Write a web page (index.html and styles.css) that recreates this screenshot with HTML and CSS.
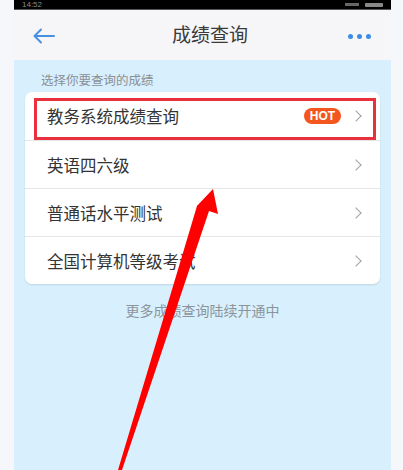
FILE: index.html
```html
<!DOCTYPE html>
<html lang="zh-CN">

<head>
  <meta charset="UTF-8">
  <meta name="viewport" content="width=device-width, initial-scale=1.0">
  <title>成绩查询</title>
  <link rel="stylesheet" href="styles.css">
</head>

<body>
  <div class="screen">
    <div class="status-bar">
      <span class="time">14:52</span>
      <span class="status-icons"><i class="signal"></i><i class="battery"></i></span>
    </div>

    <div class="nav-bar">
      <svg class="back" width="24" height="16" viewBox="0 0 24 16">
        <path d="M22 8H3M9 1.5L2.5 8L9 14.5" fill="none" stroke="#4a90e2" stroke-width="2" stroke-linecap="round" stroke-linejoin="round"/>
      </svg>
      <div class="title">成绩查询</div>
      <div class="more"><i></i><i></i><i></i></div>
    </div>

    <div class="content">
      <div class="hint">选择你要查询的成绩</div>
      <div class="card">
        <div class="row highlight">
          <span class="label">教务系统成绩查询</span>
          <span class="hot">HOT</span>
          <span class="chevron"></span>
        </div>
        <div class="row">
          <span class="label">英语四六级</span>
          <span class="chevron"></span>
        </div>
        <div class="row">
          <span class="label">普通话水平测试</span>
          <span class="chevron"></span>
        </div>
        <div class="row">
          <span class="label">全国计算机等级考试</span>
          <span class="chevron"></span>
        </div>
      </div>
      <div class="footer-note">更多成绩查询陆续开通中</div>
    </div>
  </div>

  <!-- стрелка-пометка поверх скриншота -->
  <svg class="pointer" width="403" height="470" viewBox="0 0 403 470">
    <path d="M213 189 L218 214 L209 211 L122 470 L118 470 L197 206 L195 208 Z" fill="#ff0000"/>
  </svg>
</body>

</html>
```

FILE: styles.css
```css
html, body {
  margin: 0;
  padding: 0;
}

body {
  width: 403px;
  height: 470px;
  overflow: hidden;
  background-color: #f6f7fb;
  font-family: "Noto Sans CJK SC", "Noto Sans", sans-serif;
  position: relative;
}

.screen {
  margin: 0 12px 0 14px;
  height: 470px;
  display: flex;
  flex-direction: column;
}

.status-bar {
  height: 10px;
  background-color: #000;
  border-bottom: 1px solid #555;
  box-sizing: border-box;
  display: flex;
  justify-content: space-between;
  align-items: center;
  overflow: hidden;
  padding: 0 8px;
}

.time {
  color: #8a8a8a;
  font-size: 8px;
  line-height: 9px;
  font-family: "Liberation Sans", sans-serif;
}

.status-icons {
  display: flex;
  align-items: center;
  gap: 6px;
}

.signal {
  width: 14px;
  height: 3px;
  background-color: #666;
}

.battery {
  width: 18px;
  height: 4px;
  border-radius: 1px;
  background-color: #888;
}

.nav-bar {
  height: 50px;
  background-color: #f6f6f8;
  display: flex;
  align-items: center;
  justify-content: space-between;
  padding: 0 20px 0 18px;
}

.back {
  display: block;
  margin-top: 2px;
}

.title {
  font-size: 19px;
  color: #3a3a3a;
  margin-left: 16px;
  margin-top: -4px;
}

.more {
  display: flex;
  gap: 4px;
  margin-top: 2px;
}

.more i {
  width: 5px;
  height: 5px;
  border-radius: 50%;
  background-color: #3d8de6;
}

.content {
  flex: 1;
  background-color: #d8f0fd;
  padding: 12px 11px 0;
}

.hint {
  font-size: 12.5px;
  line-height: 15px;
  color: #8a8f96;
  padding-left: 16px;
  margin-bottom: 5px;
}

.card {
  background-color: #fff;
  border-radius: 7px;
  box-shadow: 0 1px 2px rgba(0, 0, 0, 0.12);
  overflow: hidden;
}

.row {
  height: 47px;
  display: flex;
  align-items: center;
  padding: 0 18px 0 22px;
  border-top: 1px solid #e4e6e8;
  position: relative;
}

.row:first-child {
  border-top: none;
  height: 48px;
}

.label {
  flex: 1;
  font-size: 16.5px;
  color: #333;
}

.highlight::after {
  content: "";
  position: absolute;
  top: 6px;
  left: 9px;
  right: 4px;
  bottom: 0;
  border: 3px solid #e8313c;
}

.hot {
  background-color: #f4561f;
  color: #fff;
  font-family: "Liberation Sans", sans-serif;
  font-weight: bold;
  font-size: 12px;
  line-height: 16px;
  width: 37px;
  text-align: center;
  border-radius: 8px;
  margin-right: 11px;
}

.chevron {
  width: 7px;
  height: 7px;
  border-top: 1.5px solid #a0a0a0;
  border-right: 1.5px solid #a0a0a0;
  transform: rotate(45deg);
  margin-right: 2px;
}

.footer-note {
  text-align: center;
  font-size: 14px;
  color: #8b949c;
  margin-top: 16px;
}

.pointer {
  position: absolute;
  top: 0;
  left: 0;
  pointer-events: none;
}
```
